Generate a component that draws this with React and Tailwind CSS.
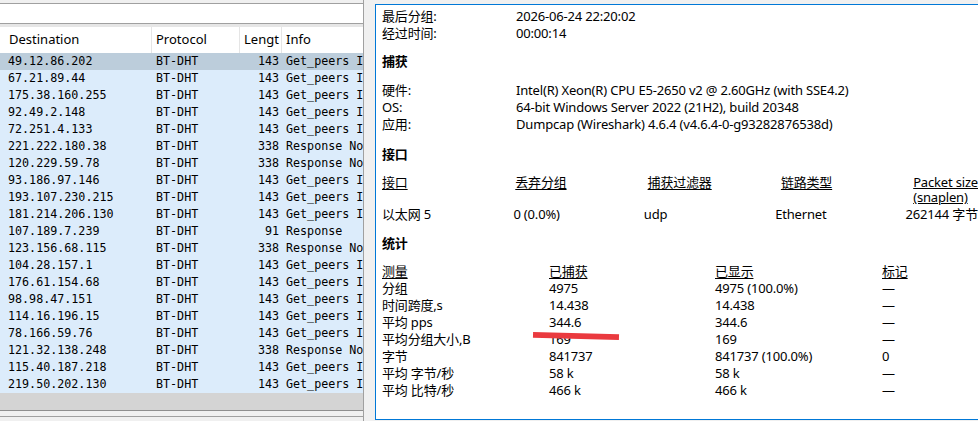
import React from 'react';

const packets = [
  ['49.12.86.202', '143', 'Get_peers Info'],
  ['67.21.89.44', '143', 'Get_peers Info'],
  ['175.38.160.255', '143', 'Get_peers Info'],
  ['92.49.2.148', '143', 'Get_peers Info'],
  ['72.251.4.133', '143', 'Get_peers Info'],
  ['221.222.180.38', '338', 'Response Nodes'],
  ['120.229.59.78', '338', 'Response Nodes'],
  ['93.186.97.146', '143', 'Get_peers Info'],
  ['193.107.230.215', '143', 'Get_peers Info'],
  ['181.214.206.130', '143', 'Get_peers Info'],
  ['107.189.7.239', '91', 'Response'],
  ['123.156.68.115', '338', 'Response Nodes'],
  ['104.28.157.1', '143', 'Get_peers Info'],
  ['176.61.154.68', '143', 'Get_peers Info'],
  ['98.98.47.151', '143', 'Get_peers Info'],
  ['114.16.196.15', '143', 'Get_peers Info'],
  ['78.166.59.76', '143', 'Get_peers Info'],
  ['121.32.138.248', '338', 'Response Nodes'],
  ['115.40.187.218', '143', 'Get_peers Info'],
  ['219.50.202.130', '143', 'Get_peers Info'],
];

const stats = [
  ['分组', '4975', '4975 (100.0%)', '—'],
  ['时间跨度,s', '14.438', '14.438', '—'],
  ['平均 pps', '344.6', '344.6', '—'],
  ['平均分组大小,B', '169', '169', '—'],
  ['字节', '841737', '841737 (100.0%)', '0'],
  ['平均 字节/秒', '58 k', '58 k', '—'],
  ['平均 比特/秒', '466 k', '466 k', '—'],
];

const ui = "font-['Noto_Sans','Noto_Sans_CJK_SC',sans-serif]";
const mono = "font-['DejaVu_Sans_Mono',monospace]";

const PacketList = () => (
  <div className="w-[364px] h-full flex flex-col border-r border-[#a0a0a0] bg-[#f0f0f0]">
    {/* filter strip */}
    <div className="h-[3px]" />
    <div className="h-[21px] bg-white border-t border-b border-[#a0a0a0]" />
    <div className="h-[3px] bg-[#e6e6e6]" />

    {/* column headers */}
    <div className={`h-[26px] flex bg-white text-[13px] text-black ${ui}`}>
      <div className="w-[152px] pl-[9px] flex items-center border-r border-[#e5e5e5]">Destination</div>
      <div className="w-[88px] pl-[4px] flex items-center border-r border-[#e5e5e5]">Protocol</div>
      <div className="w-[42px] pl-[4px] flex items-center border-r border-[#e5e5e5] overflow-hidden whitespace-nowrap">Lengt</div>
      <div className="flex-1 pl-[4px] flex items-center">Info</div>
    </div>

    {/* packet rows */}
    <div className={`flex flex-col text-[11.7px] text-black ${mono}`}>
      {packets.map(([dst, len, info], i) => (
        <div
          key={dst}
          className={`h-[17px] flex items-center whitespace-nowrap overflow-hidden ${i === 0 ? 'bg-[#bccddb]' : 'bg-[#dcecfb]'}`}
        >
          <div className="w-[152px] pl-[8px]">{dst}</div>
          <div className="w-[88px] pl-[4px]">BT-DHT</div>
          <div className="w-[42px] pr-[3px] text-right">{len}</div>
          <div className="flex-1 pl-[4px] overflow-hidden">{info}</div>
        </div>
      ))}
    </div>

    {/* horizontal scrollbar */}
    <div className="h-[18px] bg-[#d4d4d4] border-b border-[#8f8f8f]" />
    <div className="h-[6px] bg-[#f0f0f0] border-b border-[#a0a0a0]" />
  </div>
);

const Heading = ({ children, className = '' }) => (
  <div className={`h-[17px] leading-[17px] font-bold ${className}`}>{children}</div>
);

const InfoRow = ({ label, value }) => (
  <div className="h-[17px] leading-[17px] flex whitespace-nowrap">
    <div className="w-[134px]">{label}</div>
    <div>{value}</div>
  </div>
);

const CaptureProperties = () => (
  <div className={`relative flex-1 mt-[4px] ml-[11px] h-[416px] bg-white border-l border-t border-b border-[#0078d7] pl-[6px] pt-[3px] text-[13px] tracking-[-0.18px] text-black overflow-hidden ${ui}`}>
    <InfoRow label="最后分组:" value="2026-06-24 22:20:02" />
    <InfoRow label="经过时间:" value="00:00:14" />

    <Heading className="mt-[11px]">捕获</Heading>
    <div className="mt-[12px]">
      <InfoRow label="硬件:" value="Intel(R) Xeon(R) CPU E5-2650 v2 @ 2.60GHz (with SSE4.2)" />
      <InfoRow label="OS:" value="64-bit Windows Server 2022 (21H2), build 20348" />
      <InfoRow label="应用:" value="Dumpcap (Wireshark) 4.6.4 (v4.6.4-0-g93282876538d)" />
    </div>

    <Heading className="mt-[13px]">接口</Heading>
    <div className="mt-[12px] flex leading-[15px] whitespace-nowrap">
      <div className="w-[134px] underline underline-offset-2">接口</div>
      <div className="w-[133px] underline underline-offset-2">丢弃分组</div>
      <div className="w-[134px] underline underline-offset-2">捕获过滤器</div>
      <div className="w-[133px] underline underline-offset-2">链路类型</div>
      <div className="flex flex-col underline underline-offset-1">
        <span>Packet size</span>
        <span>(snaplen)</span>
      </div>
    </div>
    <div className="mt-[1px] h-[17px] leading-[17px] flex whitespace-nowrap">
      <div className="w-[134px]">以太网 5</div>
      <div className="w-[133px]">0 (0.0%)</div>
      <div className="w-[134px]">udp</div>
      <div className="w-[133px]">Ethernet</div>
      <div>262144 字节</div>
    </div>

    <Heading className="mt-[12px]">统计</Heading>
    <div className="mt-[11px] flex flex-col whitespace-nowrap">
      <div className="h-[17px] leading-[17px] flex">
        <div className="w-[167px] underline underline-offset-2">测量</div>
        <div className="w-[166px] underline underline-offset-2">已捕获</div>
        <div className="w-[167px] underline underline-offset-2">已显示</div>
        <div className="underline underline-offset-2">标记</div>
      </div>
      {stats.map(([name, captured, shown, marked]) => (
        <div key={name} className="h-[17px] leading-[17px] flex">
          <div className="w-[167px]">{name}</div>
          <div className="w-[166px]">{captured}</div>
          <div className="w-[167px]">{shown}</div>
          <div>{marked}</div>
        </div>
      ))}
    </div>

    {/* red marker stroke over the pps value */}
    <div className="absolute left-[157px] top-[328px] w-[86px] h-[6px] bg-[#ea3a3f] rotate-[1.5deg]" />
  </div>
);

export default function App() {
  return (
    <div className="w-[978px] h-[421px] flex bg-[#f0f0f0] overflow-hidden">
      <PacketList />
      <CaptureProperties />
    </div>
  );
}
